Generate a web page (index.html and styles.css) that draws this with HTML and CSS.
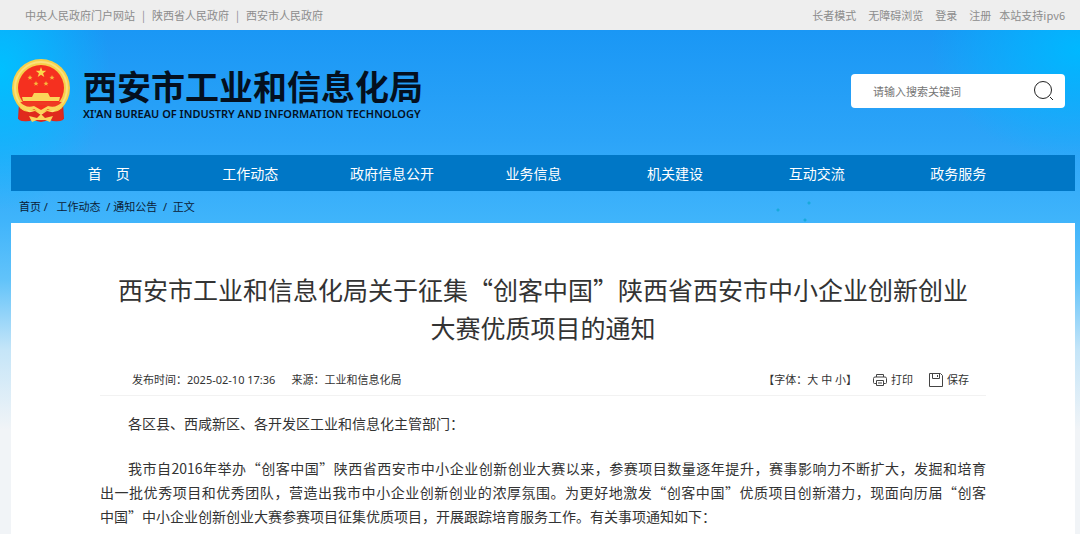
FILE: index.html
```
<!DOCTYPE html>
<html lang="zh-CN">
<head>
    <meta charset="UTF-8">
    <meta name="viewport" content="width=device-width, initial-scale=1.0">
    <title>西安市工业和信息化局</title>
    <link rel="stylesheet" href="styles.css">
</head>
<body>
    <div class="topbar">
        <div class="topbar-left">
            <a href="#">中央人民政府门户网站</a>
            <span>|</span>
            <a href="#">陕西省人民政府</a>
            <span>|</span>
            <a href="#">西安市人民政府</a>
        </div>
        <div class="topbar-right">
            <a href="#">长者模式</a>
            <a href="#">无障碍浏览</a>
            <a href="#">登录</a>
            <a href="#">注册</a>
            <span>本站支持ipv6</span>
        </div>
    </div>

    <div class="page">
        <header class="header">
            <a href="#" class="logo">
                <svg class="emblem" viewBox="0 0 60 64" aria-hidden="true">
                    <path d="M8 44 L7 60 Q15 64 21 61 L30 63 L39 61 Q45 64 53 60 L52 44 Z" fill="#d9261c"/>
                    <circle cx="30" cy="29" r="29" fill="#f7d04a"/>
                    <circle cx="30" cy="29" r="26" fill="none" stroke="#fbe07c" stroke-width="2"/>
                    <circle cx="30" cy="29" r="23" fill="#f5301f"/>
                    <path d="M30 8 L31.300 11.800 L35.300 11.800 L32.100 14.200 L33.300 18 L30 15.700 L26.700 18 L27.900 14.200 L24.700 11.800 L28.700 11.800 Z" fill="#fbd84b"/>
                    <g fill="#f9b83c">
                        <path id="star" d="M19 16 L19.700 17.800 L21.500 17.900 L20.100 19 L20.600 20.800 L19 19.800 L17.400 20.800 L17.900 19 L16.500 17.900 L18.300 17.800 Z"/>
                        <use href="#star" x="22"/>
                        <use href="#star" x="6" y="6"/>
                        <use href="#star" x="16" y="6"/>
                    </g>
                    <path d="M23 34 H37 L39 38 H49 L48 42 H12 L11 38 H21 Z" fill="#fbd65a"/>
                    <path d="M9 43 H51 L47 49 H38 L34 46 H26 L22 49 H13 Z" fill="#ef3a23"/>
                    <path d="M8 42 Q15 50 23 47 L30 51 L37 47 Q45 50 52 42 L50 49 Q42 53 37 50 L30 55 L23 50 Q18 53 10 49 Z" fill="#fbd65a"/>
                    <path d="M9 50 Q17 55 24 52 L30 56 L36 52 Q43 55 51 50 L52 61 Q45 64 39 60 L30 62 L21 60 Q15 64 8 61 Z" fill="#e02b1d"/>
                    <path d="M18 57 L26 59 L30 55 L34 59 L42 57 L39 63 L34 61 H26 L21 63 Z" fill="#fbd65a"/>
                </svg>
                <span class="logo-text">
                    <strong>西安市工业和信息化局</strong>
                    <em>XI'AN BUREAU OF INDUSTRY AND INFORMATION TECHNOLOGY</em>
                </span>
            </a>
            <form class="search">
                <input type="text" placeholder="请输入搜索关键词" aria-label="请输入搜索关键词">
                <button type="button" aria-label="搜索">
                    <svg viewBox="0 0 22 22" aria-hidden="true">
                        <circle cx="10" cy="10" r="8.500"/>
                        <path d="M17 17 L20 20"/>
                    </svg>
                </button>
            </form>
        </header>

        <nav class="nav">
            <a href="#">首&emsp;页</a>
            <a href="#">工作动态</a>
            <a href="#">政府信息公开</a>
            <a href="#">业务信息</a>
            <a href="#">机关建设</a>
            <a href="#">互动交流</a>
            <a href="#">政务服务</a>
        </nav>

        <div class="breadcrumb">
            <a href="#">首页</a> /&nbsp;&nbsp; <a href="#">工作动态</a> &nbsp;/ <a href="#">通知公告</a> &nbsp;/&nbsp; <span>正文</span>
        </div>

        <main class="article">
            <h1>西安市工业和信息化局关于征集“创客中国”陕西省西安市中小企业创新创业<br>大赛优质项目的通知</h1>

            <div class="meta">
                <div class="meta-left">
                    <span>发布时间：2025-02-10 17:36</span>
                    <span>来源：工业和信息化局</span>
                </div>
                <div class="meta-right">
                    <span>【字体：<a href="#">大</a> <a href="#">中</a> <a href="#">小</a>】</span>
                    <button type="button">
                        <svg viewBox="0 0 14 14" aria-hidden="true">
                            <path d="M3.500 4 V1.500 H10.500 V4 M3 10.500 H1.500 Q0.500 10.500 0.500 9.500 V5.500 Q0.500 4 2 4 H12 Q13.500 4 13.500 5.500 V9.500 Q13.500 10.500 12.500 10.500 H11 M3.500 7.500 H10.500 V12.500 H3.500 Z M5 10 H9"/>
                        </svg>
                        打印
                    </button>
                    <button type="button">
                        <svg viewBox="0 0 14 14" aria-hidden="true">
                            <path d="M0.500 0.500 H11.500 L13.500 2.500 V13.500 H0.500 Z M3.500 0.500 V5.500 H10.500 V0.500 M8.500 2 V4"/>
                        </svg>
                        保存
                    </button>
                </div>
            </div>

            <div class="content">
                <p>各区县、西咸新区、各开发区工业和信息化主管部门：</p>
                <p class="justified">我市自2016年举办“创客中国”陕西省西安市中小企业创新创业大赛以来，参赛项目数量逐年提升，赛事影响力不断扩大，发掘和培育<br>出一批优秀项目和优秀团队，营造出我市中小企业创新创业的浓厚氛围。为更好地激发“创客中国”优质项目创新潜力，现面向历届“创客<br><span class="last-line">中国”中小企业创新创业大赛参赛项目征集优质项目，开展跟踪培育服务工作。有关事项通知如下：</span></p>
            </div>
        </main>
    </div>
</body>
</html>
```
FILE: styles.css
```
* {
    margin: 0;
    padding: 0;
    box-sizing: border-box;
}

body {
    font-family: "Noto Sans CJK SC", sans-serif;
    font-size: 11px;
    color: #333;
    background: #f1f4f7;
}

a {
    color: inherit;
    text-decoration: none;
}

button,
input {
    font: inherit;
    color: inherit;
    border: none;
    background: none;
}

.topbar {
    display: flex;
    justify-content: space-between;
    padding: 0 15px 0 25px;
    line-height: 30px;
    color: #8c8c8c;
    background: #eee;
}

.topbar-left {
    display: flex;
    gap: 7px;
}

.topbar-right {
    display: flex;
    gap: 12px;
}

.topbar-right span {
    margin-left: -4px;
}

.page {
    padding: 0 5px 0 11px;
    background:
        radial-gradient(circle at 809px 173px, #19a9dc 1px, transparent 2px),
        radial-gradient(circle at 778px 180px, #19a9dc 1px, transparent 2px),
        radial-gradient(circle at 805px 190px, #19a9dc 1px, transparent 2px),
        radial-gradient(ellipse 110px 140px at 0 40px, #00c0ff, transparent),
        radial-gradient(ellipse 150px 110px at 100% 20px, #00b8ff, transparent),
        linear-gradient(#1a97f5 0, #2ca4f8 110px, #3fb4fb 190px, #62c3fa 250px, #c5e5f8 320px, #f1f4f7 400px);
}

.header {
    display: flex;
    justify-content: space-between;
    align-items: center;
    height: 125px;
    padding: 0 10px 4px 0;
}

.logo {
    display: flex;
    align-items: center;
    gap: 12px;
    color: #04101f;
}

.emblem {
    width: 60px;
    height: 64px;
}

.logo-text {
    display: flex;
    flex-direction: column;
    padding-top: 6px;
}

.logo-text strong {
    font-size: 34px;
    line-height: 40px;
}

.logo-text em {
    font-family: "Noto Sans", sans-serif;
    font-size: 11px;
    font-style: normal;
    font-weight: 600;
    line-height: 16px;
}

.search {
    display: flex;
    align-items: center;
    width: 214px;
    height: 34px;
    padding: 0 10px 0 22px;
    border-radius: 4px;
    background: #fff;
}

.search input {
    flex: 1;
    min-width: 0;
    outline: none;
}

.search input::placeholder {
    color: #757575;
}

.search button {
    width: 22px;
    height: 22px;
    cursor: pointer;
}

.search svg {
    display: block;
    fill: none;
    stroke: #222;
}

.nav {
    display: flex;
    padding: 0 46px 0 27px;
    font-size: 14px;
    line-height: 36px;
    color: #fff;
    background: #0077c6;
}

.nav a {
    flex: 1;
    text-align: center;
}

.breadcrumb {
    padding: 0 8px;
    font-family: "Noto Sans", "Noto Sans CJK SC", sans-serif;
    line-height: 32px;
    color: #0b2036;
}

.article {
    padding: 47px 89px 6px;
    background: #fff;
}

.article h1 {
    font-size: 25px;
    font-weight: 400;
    line-height: 38px;
    text-align: center;
}

.meta {
    display: flex;
    justify-content: space-between;
    margin-top: 19px;
    padding: 0 17px 0 32px;
    font-family: "Noto Sans", "Noto Sans CJK SC", sans-serif;
    line-height: 30px;
    border-bottom: 1px solid #f2f2f2;
}

.meta-left,
.meta-right {
    display: flex;
    gap: 16px;
}

.meta button {
    display: flex;
    align-items: center;
    gap: 4px;
    cursor: pointer;
}

.meta svg {
    width: 14px;
    height: 14px;
    fill: none;
    stroke: #444;
}

.content {
    padding-top: 15px;
    font-size: 14px;
    line-height: 24px;
}

.content p {
    margin-bottom: 21px;
    text-indent: 2em;
}

.content p:last-child {
    margin-bottom: 0;
}

.content .justified {
    text-align: justify;
    text-align-last: justify;
}

.last-line {
    display: block;
    text-indent: 0;
    text-align-last: left;
}
```
